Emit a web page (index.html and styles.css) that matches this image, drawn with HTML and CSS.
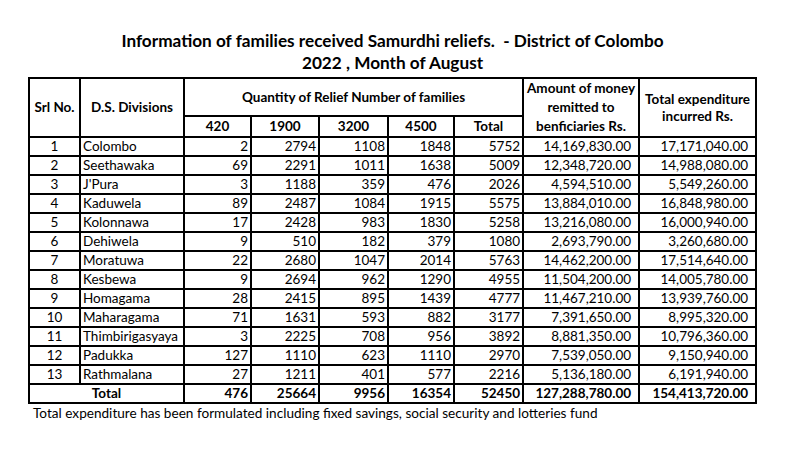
FILE: index.html
```html
<!DOCTYPE html>
<html>
<head>
<meta charset="utf-8">
<link rel="stylesheet" href="styles.css">
</head>
<body>
<div class="sheet">
  <div class="title">
    <div class="t1">Information of families received Samurdhi reliefs.&nbsp; - District of Colombo</div>
    <div class="t2">2022 , Month of August</div>
  </div>
  <table class="grid">
    <colgroup>
      <col class="c-srl"><col class="c-ds"><col class="c-q1"><col class="c-q2"><col class="c-q3"><col class="c-q4"><col class="c-q5"><col class="c-amt"><col class="c-exp">
    </colgroup>
    <thead>
      <tr class="h1">
        <th rowspan="2">Srl No.</th>
        <th rowspan="2">D.S. Divisions</th>
        <th colspan="5">Quantity of Relief Number of families</th>
        <th rowspan="2" class="amt-h">Amount of money<br>remitted to<br>benficiaries Rs.</th>
        <th rowspan="2">Total expenditure<br>incurred Rs.</th>
      </tr>
      <tr class="h2">
        <th>420</th><th>1900</th><th>3200</th><th>4500</th><th>Total</th>
      </tr>
    </thead>
    <tbody>
      <tr><td class="srl">1</td><td class="ds">Colombo</td><td>2</td><td>2794</td><td>1108</td><td>1848</td><td>5752</td><td class="money">14,169,830.00</td><td class="money">17,171,040.00</td></tr>
      <tr><td class="srl">2</td><td class="ds">Seethawaka</td><td>69</td><td>2291</td><td>1011</td><td>1638</td><td>5009</td><td class="money">12,348,720.00</td><td class="money">14,988,080.00</td></tr>
      <tr><td class="srl">3</td><td class="ds">J'Pura</td><td>3</td><td>1188</td><td>359</td><td>476</td><td>2026</td><td class="money">4,594,510.00</td><td class="money">5,549,260.00</td></tr>
      <tr><td class="srl">4</td><td class="ds">Kaduwela</td><td>89</td><td>2487</td><td>1084</td><td>1915</td><td>5575</td><td class="money">13,884,010.00</td><td class="money">16,848,980.00</td></tr>
      <tr><td class="srl">5</td><td class="ds">Kolonnawa</td><td>17</td><td>2428</td><td>983</td><td>1830</td><td>5258</td><td class="money">13,216,080.00</td><td class="money">16,000,940.00</td></tr>
      <tr><td class="srl">6</td><td class="ds">Dehiwela</td><td>9</td><td>510</td><td>182</td><td>379</td><td>1080</td><td class="money">2,693,790.00</td><td class="money">3,260,680.00</td></tr>
      <tr><td class="srl">7</td><td class="ds">Moratuwa</td><td>22</td><td>2680</td><td>1047</td><td>2014</td><td>5763</td><td class="money">14,462,200.00</td><td class="money">17,514,640.00</td></tr>
      <tr><td class="srl">8</td><td class="ds">Kesbewa</td><td>9</td><td>2694</td><td>962</td><td>1290</td><td>4955</td><td class="money">11,504,200.00</td><td class="money">14,005,780.00</td></tr>
      <tr><td class="srl">9</td><td class="ds">Homagama</td><td>28</td><td>2415</td><td>895</td><td>1439</td><td>4777</td><td class="money">11,467,210.00</td><td class="money">13,939,760.00</td></tr>
      <tr><td class="srl">10</td><td class="ds">Maharagama</td><td>71</td><td>1631</td><td>593</td><td>882</td><td>3177</td><td class="money">7,391,650.00</td><td class="money">8,995,320.00</td></tr>
      <tr><td class="srl">11</td><td class="ds">Thimbirigasyaya</td><td>3</td><td>2225</td><td>708</td><td>956</td><td>3892</td><td class="money">8,881,350.00</td><td class="money">10,796,360.00</td></tr>
      <tr><td class="srl">12</td><td class="ds">Padukka</td><td>127</td><td>1110</td><td>623</td><td>1110</td><td>2970</td><td class="money">7,539,050.00</td><td class="money">9,150,940.00</td></tr>
      <tr><td class="srl">13</td><td class="ds">Rathmalana</td><td>27</td><td>1211</td><td>401</td><td>577</td><td>2216</td><td class="money">5,136,180.00</td><td class="money">6,191,940.00</td></tr>
      <tr class="total"><td colspan="2" class="srl">Total</td><td>476</td><td>25664</td><td>9956</td><td>16354</td><td>52450</td><td class="money">127,288,780.00</td><td class="money">154,413,720.00</td></tr>
    </tbody>
  </table>
  <div class="note">Total expenditure has been formulated including fixed savings, social security and lotteries fund</div>
</div>
</body>
</html>
```
FILE: styles.css
```css
html, body {
  margin: 0;
  padding: 0;
  background: #fff;
}
body {
  font-family: Lato, "Liberation Sans", sans-serif;
  color: #000;
}
.sheet {
  padding: 30px 0 0 28px;
  width: 729px;
}
.title {
  text-align: center;
  font-weight: bold;
  font-size: 17.2px;
  line-height: 22px;
  margin-bottom: 3px;
}
.grid {
  border-collapse: collapse;
  table-layout: fixed;
  width: 729px;
  font-size: 13.5px;
}
.c-srl { width: 51px; }
.c-ds { width: 104px; }
.c-q1 { width: 67px; }
.c-q2 { width: 68px; }
.c-q3 { width: 69px; }
.c-q4 { width: 66px; }
.c-q5 { width: 69px; }
.c-amt { width: 116px; }
.c-exp { width: 117px; }
.grid th, .grid td {
  border: 2px solid #000;
  padding: 0 2px;
  line-height: 17px;
  white-space: nowrap;
  overflow: hidden;
}
.grid th {
  font-weight: bold;
  text-align: center;
}
.h1 th { height: 35px; }
.h1 th.amt-h { line-height: 19px; }
.h2 th { height: 18px; }
.grid tbody td {
  height: 17px;
  text-align: right;
  padding-right: 2px;
}
.grid tbody td.srl { text-align: center; }
.grid tbody td.ds { text-align: left; padding-left: 2px; }
.grid tbody td.money { padding-right: 7px; }
.total td { font-weight: bold; }
.note {
  font-size: 13.6px;
  line-height: 18px;
  padding-left: 5px;
}
```
